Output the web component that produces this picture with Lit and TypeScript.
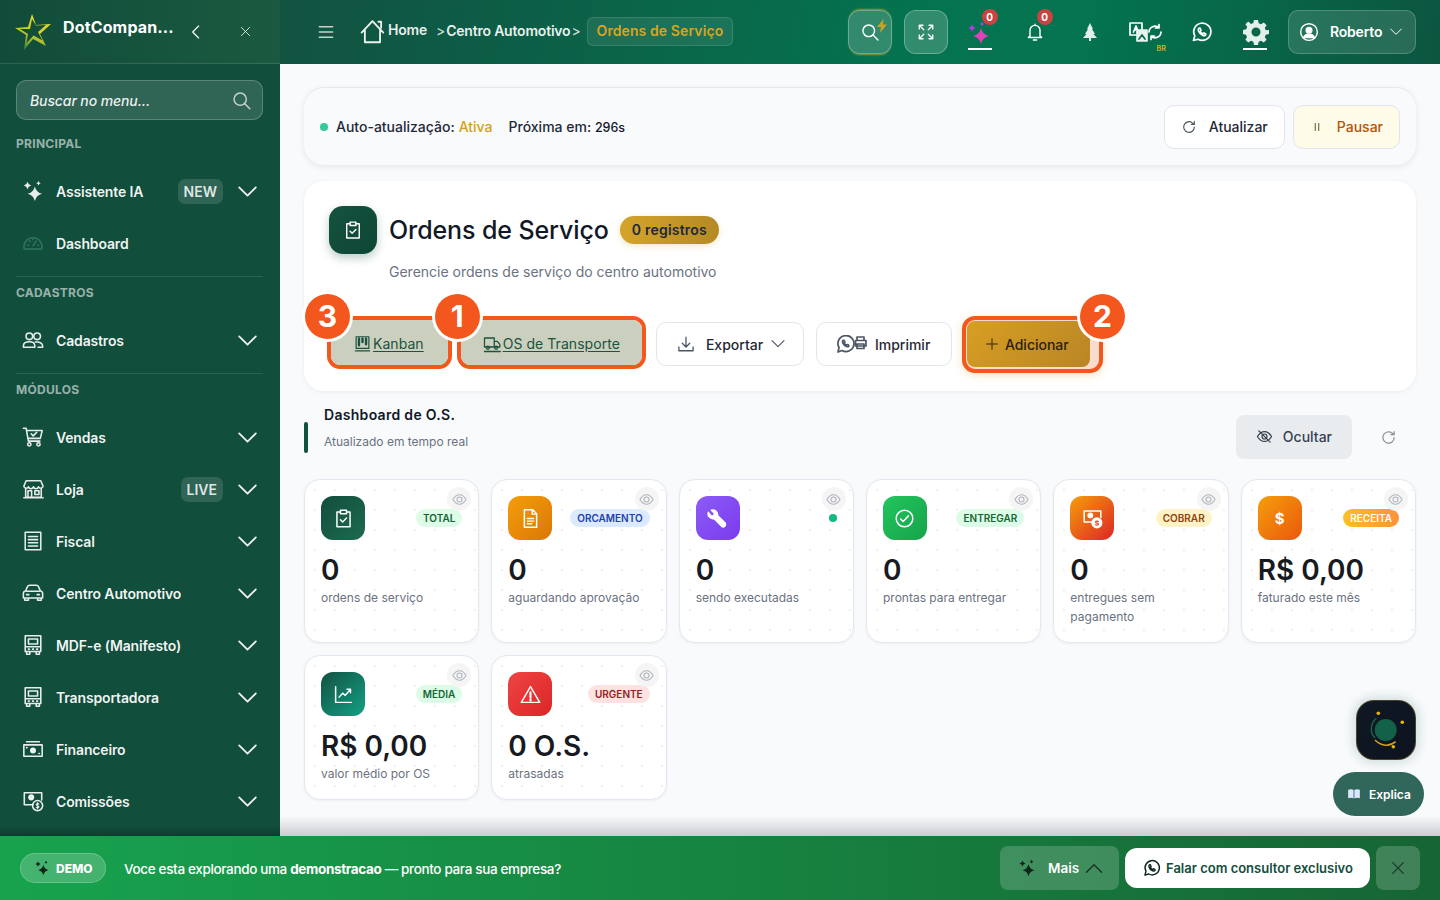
import { LitElement, css, html, svg } from 'lit'
import { customElement } from 'lit/decorators.js'

// estrela de 4 pontas, usada nos icones de IA
const star = (cx: number, cy: number, r: number) =>
  `M${cx} ${cy - r}Q${cx + r * 0.18} ${cy - r * 0.18} ${cx + r} ${cy}Q${cx + r * 0.18} ${cy + r * 0.18} ${cx} ${cy + r}Q${cx - r * 0.18} ${cy + r * 0.18} ${cx - r} ${cy}Q${cx - r * 0.18} ${cy - r * 0.18} ${cx} ${cy - r}Z`

const sparkles = `${star(13, 15, 8)}${star(5, 6, 4)}${star(17, 3.5, 2.5)}`

const whatsapp = svg`<path d="M3.5 20.5l1.3-4.6a8.6 8.6 0 1 1 3.3 3.3z" /><path d="M9 8.2c-.8.6-1 1.6-.5 2.8a7.5 7.5 0 0 0 4.4 4.4c1.2.5 2.3.2 2.8-.6.2-.4 0-.8-.3-1l-1.4-.7c-.4-.2-.7 0-.9.3l-.4.5c-1.2-.5-2.1-1.4-2.6-2.6l.5-.4c.3-.2.4-.6.3-.9l-.6-1.4c-.2-.5-.8-.7-1.3-.4z" />`

const ICONS: Record<string, unknown> = {
  chevron: svg`<path d="M4 8l8 8 8-8" />`,
  gauge: svg`<path d="M2.5 18.5a9.8 9.8 0 1 1 19 0z" /><path d="M12 15l3.5-5M6 14.5h1M17 14.5h1M8 9.5l.7.7M12 7.5v1" />`,
  team: svg`<circle cx="8" cy="8" r="3.6" /><circle cx="16.5" cy="8" r="3.6" /><path d="M1.5 20v-1.5c0-2.8 2.5-4.5 6.5-4.5s6 1.7 6 4.5V20zM14.5 14.2c4.5-.5 8 1 8 4.3V20h-5" />`,
  cart: svg`<path d="M1.5 2.5h3l2.5 14h12.5M5 5h17l-2 8.5H6.5" /><circle cx="8" cy="20" r="1.8" /><circle cx="18" cy="20" r="1.8" /><path d="M10 8.5l2.2 2.3 3.8-3.8" />`,
  store: svg`<path d="M4 11v10h17V11M2 21.5h21M4.5 3h16l2.5 6a2.6 2.6 0 0 1-5 .5 2.8 2.8 0 0 1-5.5 0 2.8 2.8 0 0 1-5.5 0 2.6 2.6 0 0 1-5-.5zM6.5 21v-7h4v7M14 14h4.5v4H14z" />`,
  receipt: svg`<path d="M3.5 2.5h17v19h-17z" stroke-dasharray="2 .5" /><path d="M7 7h10M7 10.5h10M7 14h10M7 17.5h10" />`,
  car: svg`<path d="M1.5 12c0-1 1-2 2.5-2.5L6 5c.4-1 1.3-1.5 2.5-1.5h7c1.2 0 2.1.5 2.5 1.5l2 4.5c1.5.5 2.5 1.5 2.5 2.5v5.5h-21zM3 17.5V20h4v-2.5M17 17.5V20h4v-2.5M5 10h14" /><path d="M5 13.8h2.5M16.5 13.8H19" />`,
  bus: svg`<path d="M3.5 2h17v17h-17zM3.5 14h17M7 5.5h10V11H7zM5 19v3h3.5v-3M15.5 19v3H19v-3" /><path d="M7 16.5h1M11.5 16.5h1M16 16.5h1" />`,
  cash: svg`<path d="M2 7.5h20V20H2zM5 4h14" /><circle cx="12" cy="13.7" r="2.4" fill="currentColor" /><path d="M5 10.5h.5M18.5 17h.5" />`,
  commission: svg`<path d="M12 16H2.5V3h19v8" /><circle cx="10" cy="8" r="2.5" fill="currentColor" /><circle cx="17" cy="17" r="5.5" /><path d="M18.5 15.2c-.7-.7-3-.8-3 .7s3 1 3 2.4-2.3 1.4-3 .7M17 13.7v6.6" stroke-width="1.2" />`,
  home: svg`<path d="M1.5 12.5L11.5 2l10 10.5M4.5 10v11.5h14V10M17 2.5h2.5V8" />`,
  search: svg`<circle cx="10.5" cy="10.5" r="7" /><path d="M16 16l5.5 5.5" />`,
  expand: svg`<path d="M3 8V3h5M3 3l6 6M21 8V3h-5M21 3l-6 6M3 16v5h5M3 21l6-6M21 16v5h-5M21 21l-6-6" />`,
  bell: svg`<path d="M6 17V10a6 6 0 0 1 12 0v7l2 1.5H4zM10 21.5h4M12 2.5V4" />`,
  user: svg`<circle cx="12" cy="12" r="10" /><circle cx="12" cy="9.8" r="3.4" fill="currentColor" /><path d="M5.5 18.5c1-3 3.5-4 6.5-4s5.5 1 6.5 4z" fill="currentColor" />`,
  refresh: svg`<path d="M20 12a8 8 0 1 1-3-6.2L20 8M20 3.5V8h-4.5" />`,
  pause: svg`<path d="M9 6v12M15 6v12" />`,
  clipboard: svg`<path d="M8.5 4.5h-4v17h15v-17h-4" /><path d="M8.5 2.5h7v4h-7zM8.5 13.5L11 16l4.5-4.5" />`,
  kanban: svg`<path d="M3 2.5h18V19H3z" /><path d="M7 5v9.5M12 5v5M17 5v8" stroke-width="3.4" /><path d="M2 22.5h20" />`,
  truck: svg`<path d="M2 4h13v12H2zM15 8.5h4l3.5 4V16H15z" /><circle cx="6.5" cy="17" r="2" /><circle cx="17.5" cy="17" r="2" /><path d="M2 22h21" />`,
  download: svg`<path d="M12 3v12.5M7 11l5 5 5-5M2.5 16v5h19v-5" />`,
  plus: svg`<path d="M12 3v18M3 12h18" />`,
  eyeOff: svg`<path d="M2 12c3-5 6-7 10-7s7 2 10 7c-3 5-6 7-10 7s-7-2-10-7z" /><circle cx="12" cy="12" r="3.5" /><path d="M4 4l16 16" />`,
  eye: svg`<path d="M1.5 12c3-5 6.5-7.5 10.5-7.5s7.5 2.5 10.5 7.5c-3 5-6.5 7.5-10.5 7.5S4.5 17 1.5 12z" /><circle cx="12" cy="12" r="4" />`,
  file: svg`<path d="M5 2h9.5L19 6.5V22H5zM14 2v5h5M8.5 12h7M8.5 15h7M8.5 18h5" />`,
  wrench: svg`<path d="M21 17.5l-9-9a5.5 5.5 0 0 0-7-6l3.5 3.5-.8 2.7-2.7.8L1.5 5a5.5 5.5 0 0 0 6.5 7l9 9a2.5 2.5 0 0 0 3.5-3.5z" fill="currentColor" />`,
  check: svg`<circle cx="12" cy="12" r="9.5" /><path d="M7.5 12.5l3 3 6-6.5" />`,
  money: svg`<path d="M12 16H2.5V3.5h19V11" /><circle cx="9.5" cy="8.5" r="2.5" fill="currentColor" /><circle cx="17" cy="17" r="5.5" fill="currentColor" /><path d="M18.8 15.5c-.8-.8-3.4-.8-3.4.6s3.4 1 3.4 2.4-2.6 1.3-3.4.5" stroke="#dc4a1f" stroke-width="1.3" />`,
  chart: svg`<path d="M3 3v18h18" /><path d="M7 15l4-4.5 3 2.5 6-7M16 6h4v4" />`,
  warning: svg`<path d="M12 3L1.5 21h21z" /><path d="M12 9.5v6M12 17.5V19" stroke-width="2.4" />`,
  close: svg`<path d="M4 4l16 16M20 4L4 20" />`,
  whatsapp,
}

const icon = (name: string, size: number, cls = '') =>
  html`<svg class="ico ${cls}" width=${size} height=${size} viewBox="0 0 24 24">${ICONS[name]}</svg>`

const sparkleIcon = (size: number, cls = '') =>
  html`<svg class="spark ${cls}" width=${size} height=${size} viewBox="0 0 22 24"><path d=${sparkles} /></svg>`

interface MenuItem {
  label: string
  icon: string
  tag?: string
  noArrow?: boolean
}

const MODULES: MenuItem[] = [
  { label: 'Vendas', icon: 'cart' },
  { label: 'Loja', icon: 'store', tag: 'LIVE' },
  { label: 'Fiscal', icon: 'receipt' },
  { label: 'Centro Automotivo', icon: 'car' },
  { label: 'MDF-e (Manifesto)', icon: 'bus' },
  { label: 'Transportadora', icon: 'bus' },
  { label: 'Financeiro', icon: 'cash' },
  { label: 'Comissões', icon: 'commission' },
]

interface Stat {
  icon: string
  tone: string
  tag?: string
  tagTone?: string
  value: string
  label: string
}

const STATS: Stat[] = [
  { icon: 'clipboard', tone: 'tone-forest', tag: 'TOTAL', tagTone: 'tag-green', value: '0', label: 'ordens de serviço' },
  { icon: 'file', tone: 'tone-amber', tag: 'ORCAMENTO', tagTone: 'tag-blue', value: '0', label: 'aguardando aprovação' },
  { icon: 'wrench', tone: 'tone-violet', value: '0', label: 'sendo executadas' },
  { icon: 'check', tone: 'tone-green', tag: 'ENTREGAR', tagTone: 'tag-green', value: '0', label: 'prontas para entregar' },
  { icon: 'money', tone: 'tone-red-orange', tag: 'COBRAR', tagTone: 'tag-yellow', value: '0', label: 'entregues sem pagamento' },
  { icon: 'dollar', tone: 'tone-orange', tag: 'RECEITA', tagTone: 'tag-orange', value: 'R$ 0,00', label: 'faturado este mês' },
  { icon: 'chart', tone: 'tone-teal', tag: 'MÉDIA', tagTone: 'tag-green', value: 'R$ 0,00', label: 'valor médio por OS' },
  { icon: 'warning', tone: 'tone-red', tag: 'URGENTE', tagTone: 'tag-red', value: '0 O.S.', label: 'atrasadas' },
]

@customElement('app-root')
export class AppRoot extends LitElement {
  static styles = css`
    :host {
      display: block;
      width: 1440px;
      height: 900px;
      overflow: hidden;
      font-family: Inter, 'Liberation Sans', sans-serif;
      color: #111827;
      background: #f8fafc;
    }
    * {
      box-sizing: border-box;
    }
    .ico {
      display: block;
      flex: none;
      fill: none;
      stroke: currentColor;
      stroke-width: 1.7;
      stroke-linecap: round;
      stroke-linejoin: round;
    }
    .spark {
      display: block;
      flex: none;
      fill: currentColor;
    }
    .shell {
      display: grid;
      grid-template-columns: 280px 1fr;
      height: 836px;
    }

    /* menu lateral */
    .side {
      height: 836px;
      overflow: hidden;
      color: #fff;
      background: linear-gradient(#124e3c calc(100% - 10px), #0b3d31);
    }
    .brand {
      display: flex;
      align-items: center;
      height: 64px;
      padding-left: 15px;
      border-bottom: 1px solid rgba(255, 255, 255, 0.12);
      background: linear-gradient(90deg, #114c3a, #1b5a40);
    }
    .brand-name {
      width: 125px;
      margin: -10px 0 0 12px;
      font-size: 16px;
      font-weight: 700;
      letter-spacing: 0.15px;
      white-space: nowrap;
    }
    .brand-back {
      margin-right: 36px;
    }
    .search {
      display: flex;
      align-items: center;
      justify-content: space-between;
      height: 40px;
      margin: 16px 17px 0 16px;
      padding: 0 10px 0 13px;
      border: 1px solid rgba(255, 255, 255, 0.22);
      border-radius: 10px;
      background: rgba(255, 255, 255, 0.13);
      font-size: 14px;
      font-style: italic;
      font-weight: 500;
      letter-spacing: -0.1px;
      color: rgba(255, 255, 255, 0.92);
    }
    .search .ico {
      color: rgba(255, 255, 255, 0.7);
    }
    .group {
      height: 16px;
      margin: 16px 16px 13px;
      font-size: 12px;
      line-height: 16px;
      font-weight: 700;
      letter-spacing: 0.3px;
      color: rgba(255, 255, 255, 0.58);
    }
    .rule {
      height: 1px;
      margin: 7px 17px -8px 16px;
      background: rgba(255, 255, 255, 0.12);
    }
    .item {
      display: flex;
      align-items: center;
      height: 52px;
      padding: 0 20px 0 22px;
      font-size: 14px;
      font-weight: 600;
      letter-spacing: -0.15px;
      color: rgba(255, 255, 255, 0.94);
    }
    .item-icon {
      width: 22px;
      margin-right: 12px;
      color: rgba(255, 255, 255, 0.9);
    }
    .item-icon.dim {
      color: #2d7560;
    }
    .item-label {
      flex: 1;
    }
    .item-tag {
      margin-right: 12px;
      padding: 4px 6px;
      border-radius: 7px;
      background: rgba(255, 255, 255, 0.13);
      font-size: 14px;
      line-height: 17px;
      font-weight: 600;
      letter-spacing: 0;
      color: rgba(255, 255, 255, 0.85);
    }

    /* coluna principal */
    .column {
      position: relative;
      height: 836px;
      overflow: hidden;
    }
    .top {
      display: flex;
      align-items: center;
      height: 64px;
      padding: 0 24px 0 37px;
      color: #fff;
      background: linear-gradient(100deg, #125241 0%, #04734f 55%, #04734f 70%, #0c5540 100%);
    }
    .top-menu {
      color: rgba(255, 255, 255, 0.75);
    }
    .crumbs {
      display: flex;
      align-items: center;
      margin: -1px 0 0 25px;
      font-size: 14px;
      font-weight: 600;
      letter-spacing: -0.2px;
      color: rgba(255, 255, 255, 0.92);
    }
    .crumb-home {
      margin: -5px 0 0 2px;
    }
    .crumb-text {
      margin-top: -2px;
    }
    .crumb-sep {
      margin: -2px 1px 0 9px;
      font-weight: 400;
      opacity: 0.9;
    }
    .crumb-sep.tight {
      margin-left: 1px;
    }
    .crumb-now {
      margin-left: 5px;
      padding: 0 9px;
      height: 29px;
      line-height: 25px;
      border: 1px solid rgba(255, 255, 255, 0.12);
      border-radius: 6px;
      background: rgba(255, 255, 255, 0.08);
      letter-spacing: 0.1px;
      color: #d9a41e;
    }
    .tools {
      display: flex;
      align-items: center;
      margin-left: auto;
    }
    .tool-btn {
      position: relative;
      display: grid;
      place-items: center;
      width: 44px;
      height: 44px;
      margin-right: 12px;
      border: 1px solid rgba(255, 255, 255, 0.28);
      border-radius: 12px;
      background: rgba(255, 255, 255, 0.18);
    }
    .tool-btn.glow {
      box-shadow: 0 -2px 2px -1px rgba(212, 170, 40, 0.7), 0 2px 2px -1px rgba(212, 170, 40, 0.7);
    }
    .bolt {
      position: absolute;
      top: 8px;
      right: 4px;
    }
    .tool {
      position: relative;
      display: grid;
      place-items: center;
      width: 55px;
      height: 44px;
    }
    .tool.first {
      margin-left: -7.5px;
    }
    .tool.wa {
      padding-left: 4px;
    }
    .tool.gear {
      padding-left: 2px;
    }
    .tool.mark::after {
      content: '';
      position: absolute;
      left: 15px;
      bottom: 4px;
      width: 24px;
      height: 2px;
      background: #fff;
    }
    .count {
      position: absolute;
      top: -1px;
      left: 29px;
      width: 16px;
      height: 16px;
      border-radius: 50%;
      background: #c94343;
      font-size: 10px;
      line-height: 16px;
      font-weight: 700;
      text-align: center;
    }
    .country {
      position: absolute;
      left: 39px;
      bottom: 1px;
      font-size: 7px;
      font-weight: 700;
      color: #d9a41e;
    }
    .user {
      display: flex;
      align-items: center;
      width: 128px;
      height: 44px;
      margin-left: 5.5px;
      padding: 0 10px;
      border: 1px solid rgba(255, 255, 255, 0.2);
      border-radius: 10px;
      background: rgba(255, 255, 255, 0.12);
      font-size: 14px;
      font-weight: 600;
      letter-spacing: -0.2px;
    }
    .user span {
      margin: -2px 7px 0 11px;
    }

    .page {
      padding: 23px 24px 0;
    }
    .auto {
      display: flex;
      align-items: center;
      height: 78px;
      padding: 0 16px;
      border-top: 1px solid #e5e7eb;
      border-radius: 20px;
      background: #f8fafc;
      box-shadow: 0 2px 6px rgba(15, 23, 42, 0.08);
      font-size: 14px;
      font-weight: 500;
      color: #1f2937;
    }
    .auto-dot {
      width: 8px;
      height: 8px;
      margin-right: 8px;
      border-radius: 50%;
      background: #34c997;
    }
    .auto-on {
      margin: 0 16px 0 4px;
      color: #d4a017;
    }
    .auto-next b {
      font-size: 12.5px;
      font-weight: 500;
      color: #111827;
    }
    .auto-actions {
      display: flex;
      gap: 8px;
      margin-left: auto;
    }
    .btn {
      display: flex;
      align-items: center;
      height: 44px;
      padding: 0 16px;
      border: 1px solid #e2e5ec;
      border-radius: 10px;
      background: #fff;
      font-size: 14px;
      font-weight: 500;
      color: #1f2937;
    }
    .btn .ico {
      color: #4b5563;
    }
    .btn-refresh {
      gap: 12px;
    }
    .btn-pause {
      gap: 13px;
      background: #fefbe8;
      color: #b45309;
    }
    .btn-pause .ico {
      color: #4d5a1f;
    }

    .hero {
      height: 210px;
      margin-top: 16px;
      padding: 25px 24px 0;
      border-radius: 20px;
      background: #fff;
      box-shadow: 0 1px 4px rgba(15, 23, 42, 0.06);
    }
    .hero-head {
      display: flex;
      align-items: center;
    }
    .hero-icon {
      display: grid;
      place-items: center;
      width: 48px;
      height: 48px;
      margin: 0 12px 0 1px;
      border-radius: 14px;
      background: linear-gradient(135deg, #14533f, #0e4534);
      color: #fff;
      box-shadow: 0 4px 10px rgba(15, 76, 58, 0.28);
    }
    h1 {
      margin: 0;
      font-size: 25px;
      line-height: 32px;
      font-weight: 500;
      letter-spacing: -0.1px;
      color: #111827;
    }
    .hero-count {
      margin-left: 11px;
      padding: 0 12px;
      height: 28px;
      border-radius: 14px;
      background: linear-gradient(90deg, #d4a42a, #b58a25);
      box-shadow: 0 2px 6px rgba(212, 164, 42, 0.25);
      font-size: 14px;
      line-height: 28px;
      font-weight: 600;
      letter-spacing: 0.2px;
      color: #1f2937;
    }
    .hero-sub {
      margin: 8px 0 0 61px;
      font-size: 14px;
      line-height: 20px;
      color: #6b7280;
    }
    .actions {
      display: flex;
      align-items: flex-start;
      margin: 34px 0 0 -1px;
    }
    .mark-box {
      position: relative;
      flex: none;
      border: 4px solid #f4571e;
      border-radius: 13px;
    }
    .link-btn {
      display: flex;
      align-items: center;
      gap: 2px;
      height: 45px;
      padding: 2px 22px 0 22px;
      border-radius: 9px;
      background: #cbcfbd;
      font-size: 14px;
      letter-spacing: 0.05px;
      color: #1c5240;
      text-decoration: underline;
      text-underline-offset: 2px;
    }
    .kanban {
      margin-right: 5px;
    }
    .kanban .link-btn {
      padding: 2px 24px 0 23px;
    }
    .transport {
      margin-right: 10px;
    }
    .plain {
      flex: none;
      margin-top: 6px;
    }
    .btn-export {
      gap: 11px;
      width: 148px;
      padding: 0 20px;
      margin-right: 12px;
    }
    .btn-export .caret {
      margin-left: -4px;
    }
    .btn-print {
      width: 136px;
      padding: 0 20px;
      gap: 8px;
      margin-right: 10px;
    }
    .add-box {
      width: 141px;
      height: 57px;
      padding: 1px 9px 2px 1px;
      background: #f9dccb;
      box-shadow: 0 2px 10px rgba(212, 164, 42, 0.3);
    }
    .add-btn {
      display: flex;
      align-items: center;
      gap: 6px;
      height: 100%;
      padding-left: 18px;
      border-radius: 8px;
      background: linear-gradient(135deg, #d79f22, #b98526);
      font-size: 14px;
      font-weight: 500;
      color: #2b2113;
    }
    .step {
      position: absolute;
      z-index: 2;
      top: -26px;
      left: -26px;
      width: 45px;
      height: 45px;
      border-radius: 50%;
      background: #f4571e;
      box-shadow: 0 0 0 3px #fff;
      font-size: 30px;
      line-height: 45px;
      font-weight: 700;
      text-align: center;
      color: #fff;
    }
    .step.right {
      left: auto;
      right: -26px;
    }

    .dash-head {
      display: flex;
      height: 54px;
      margin-top: 14px;
    }
    .dash-bar {
      width: 4px;
      height: 31px;
      margin-top: 17px;
      border-radius: 2px;
      background: #125241;
    }
    .dash-text {
      margin-left: 16px;
    }
    .dash-title {
      font-size: 14px;
      line-height: 20px;
      font-weight: 600;
      letter-spacing: 0.3px;
      color: #111827;
    }
    .dash-sub {
      margin-top: 7px;
      font-size: 12px;
      line-height: 20px;
      color: #6b7280;
    }
    .dash-hide {
      display: flex;
      align-items: center;
      gap: 10px;
      align-self: flex-end;
      height: 44px;
      margin-left: auto;
      padding: 0 20px 1px;
      border-radius: 8px;
      background: #e9ecef;
      font-size: 14px;
      font-weight: 500;
      color: #374151;
    }
    .dash-refresh {
      display: grid;
      place-items: center;
      align-self: flex-end;
      width: 40px;
      height: 44px;
      margin: 0 8px 0 16px;
      color: #8b9098;
    }
    .stats {
      display: grid;
      grid-template-columns: repeat(6, 1fr);
      gap: 12px;
      margin-top: 20px;
    }
    .stat {
      position: relative;
      min-width: 0;
      padding: 16px;
      border: 1px solid #e3e8f0;
      border-radius: 16px;
      background-color: #fff;
      background-image: radial-gradient(circle, #eef0f3 1px, transparent 1.2px);
      background-size: 20px 20px;
      box-shadow: 0 1px 3px rgba(15, 23, 42, 0.05);
    }
    .stat-head {
      display: flex;
      align-items: center;
      justify-content: space-between;
      height: 44px;
    }
    .stat-icon {
      display: grid;
      place-items: center;
      width: 44px;
      height: 44px;
      border-radius: 12px;
      font-size: 15px;
      font-weight: 700;
      color: #fff;
    }
    .tone-forest {
      background: linear-gradient(135deg, #124e3c, #1d6a50);
    }
    .tone-amber {
      background: linear-gradient(135deg, #f59e0b, #d97706);
    }
    .tone-violet {
      background: linear-gradient(135deg, #8b5cf6, #7c3aed);
    }
    .tone-green {
      background: linear-gradient(135deg, #22c55e, #16a34a);
    }
    .tone-red-orange {
      background: linear-gradient(135deg, #f59e0b, #dc2626);
    }
    .tone-orange {
      background: linear-gradient(135deg, #f59e0b, #ea580c);
    }
    .tone-teal {
      background: linear-gradient(135deg, #125241, #14a085);
    }
    .tone-red {
      background: linear-gradient(135deg, #ef4444, #dc2626);
    }
    .stat-tag {
      height: 18px;
      padding: 0 7px;
      border-radius: 9px;
      font-size: 10px;
      line-height: 18px;
      font-weight: 600;
    }
    .tag-green {
      background: #dcfce7;
      color: #166534;
    }
    .tag-blue {
      background: #dbeafe;
      color: #1e40af;
    }
    .tag-yellow {
      background: #fef3c7;
      color: #92400e;
    }
    .tag-orange {
      background: linear-gradient(90deg, #fbbf24, #fb923c);
      color: #fff;
    }
    .tag-red {
      background: #fee2e2;
      color: #991b1b;
    }
    .stat-dot {
      width: 8px;
      height: 8px;
      border-radius: 50%;
      background: #10b981;
    }
    .stat-value {
      margin-top: 12px;
      font-size: 28px;
      line-height: 36px;
      font-weight: 600;
      color: #171a1f;
    }
    .stat-label {
      font-size: 12px;
      line-height: 19px;
      color: #6b7280;
    }
    .stat-eye {
      position: absolute;
      top: 7px;
      right: 7px;
      display: grid;
      place-items: center;
      width: 24px;
      height: 24px;
      border-radius: 50%;
      background: #f5f5f6;
      color: #b0b4bb;
    }

    /* flutuantes */
    .fade {
      position: absolute;
      left: 0;
      right: 0;
      bottom: 0;
      height: 20px;
      background: linear-gradient(rgba(60, 60, 70, 0), rgba(60, 60, 70, 0.24));
    }
    .orb {
      position: absolute;
      top: 700px;
      right: 24px;
      width: 60px;
      height: 60px;
      border: 1px solid rgba(180, 150, 70, 0.35);
      border-radius: 18px;
      background: linear-gradient(135deg, #101824, #0d1420);
      box-shadow: 0 0 8px 4px rgba(18, 82, 65, 0.14);
    }
    .explain {
      position: absolute;
      top: 772px;
      right: 16px;
      display: flex;
      align-items: center;
      gap: 9px;
      width: 91px;
      height: 44px;
      padding-left: 15px;
      border-radius: 22px;
      background: #31675a;
      font-size: 12px;
      font-weight: 600;
      color: #fff;
    }

    /* faixa de demonstracao */
    .demo {
      display: flex;
      align-items: center;
      height: 64px;
      padding: 0 20px;
      background: linear-gradient(90deg, #17a34e, #166534);
      color: #fff;
    }
    .demo-tag {
      display: flex;
      align-items: center;
      gap: 6px;
      width: 86px;
      height: 30px;
      padding-left: 13px;
      border: 1px solid rgba(255, 255, 255, 0.2);
      border-radius: 15px;
      background: rgba(255, 255, 255, 0.2);
      font-size: 12px;
      font-weight: 800;
    }
    .demo-tag .spark,
    .demo-more .spark {
      color: #10231a;
    }
    .demo-text {
      margin: 1px 0 0 18px;
      font-size: 13.5px;
      font-weight: 500;
      letter-spacing: -0.35px;
    }
    .demo-text b {
      font-weight: 700;
    }
    .demo-more {
      display: flex;
      align-items: center;
      gap: 12px;
      width: 119px;
      height: 44px;
      margin-left: auto;
      padding-left: 18px;
      border-radius: 8px;
      background: rgba(255, 255, 255, 0.18);
      font-size: 13.5px;
      font-weight: 600;
    }
    .demo-more .ico {
      margin-left: -7px;
      color: #1c3328;
    }
    .demo-call {
      display: flex;
      align-items: center;
      gap: 4px;
      width: 245px;
      height: 40px;
      margin-left: 6px;
      padding-left: 17px;
      border-radius: 12px;
      background: #fff;
      font-size: 13px;
      font-weight: 600;
      white-space: nowrap;
      color: #124e3c;
    }
    .demo-call .ico {
      color: #10231a;
    }
    .demo-close {
      display: grid;
      place-items: center;
      width: 44px;
      height: 44px;
      margin-left: 6px;
      border-radius: 8px;
      background: rgba(255, 255, 255, 0.18);
      color: #1c3328;
    }
  `

  private renderItem(item: MenuItem, dim = false) {
    return html`
      <div class="item">
        <span class="item-icon ${dim ? 'dim' : ''}">${icon(item.icon, 22)}</span>
        <span class="item-label">${item.label}</span>
        ${item.tag ? html`<span class="item-tag">${item.tag}</span>` : null}
        ${item.noArrow ? null : icon('chevron', 25)}
      </div>
    `
  }

  private renderSide() {
    return html`
      <aside class="side">
        <div class="brand">
          <svg width="36" height="38" viewBox="0 0 36 38">
            <defs>
              <linearGradient id="logo" x1="0.7" y1="0" x2="0.2" y2="1">
                <stop offset="0" stop-color="#f0e02c" />
                <stop offset="0.55" stop-color="#c2c92e" />
                <stop offset="1" stop-color="#2d7a3d" />
              </linearGradient>
            </defs>
            <path
              fill="url(#logo)"
              fill-rule="evenodd"
              d="M17 1l4 11 15-1-11 10 6 12-13-7-9 11 2-15L0 15l13-1zM17 6l-2 10-10 0 8 5-1.5 9 7-7.5 9 5-4.5-8.5 8-7-10 .5z"
            />
          </svg>
          <span class="brand-name">DotCompan...</span>
          <svg class="ico brand-back" width="16" height="16" viewBox="0 0 24 24"><path d="M16 3l-9 9 9 9" /></svg>
          <svg class="ico" width="11" height="11" viewBox="0 0 24 24" stroke-width="3"><path d="M3 3l18 18M21 3L3 21" /></svg>
        </div>
        <div class="search">Buscar no menu... ${icon('search', 21)}</div>
        <div class="group">PRINCIPAL</div>
        <div class="item">
          <span class="item-icon">${sparkleIcon(22)}</span>
          <span class="item-label">Assistente IA</span>
          <span class="item-tag">NEW</span>
          ${icon('chevron', 25)}
        </div>
        ${this.renderItem({ label: 'Dashboard', icon: 'gauge', noArrow: true }, true)}
        <div class="rule"></div>
        <div class="group">CADASTROS</div>
        ${this.renderItem({ label: 'Cadastros', icon: 'team' })}
        <div class="rule"></div>
        <div class="group">MÓDULOS</div>
        ${MODULES.map((m) => this.renderItem(m))}
      </aside>
    `
  }

  private renderTop() {
    return html`
      <header class="top">
        <svg class="ico top-menu" width="18" height="18" viewBox="0 0 24 24" stroke-width="1.5"><path d="M3 5h18M3 12h18M3 19h18" /></svg>
        <nav class="crumbs">
          ${icon('home', 26)}
          <span class="crumb-home">Home</span>
          <span class="crumb-sep">&gt;</span>
          <span class="crumb-text">Centro Automotivo</span>
          <span class="crumb-sep tight">&gt;</span>
          <span class="crumb-now">Ordens de Serviço</span>
        </nav>
        <div class="tools">
          <div class="tool-btn glow">
            ${icon('search', 20)}
            <svg class="bolt" width="10" height="14" viewBox="0 0 10 14"><path fill="#c9a227" d="M6.5 0L0 8h4l-1 6 7-8.5H6z" /></svg>
          </div>
          <div class="tool-btn">${icon('expand', 18)}</div>
          <div class="tool first mark">
            <svg class="spark" width="26" height="26" viewBox="0 0 26 26">
              <path fill="#e040b8" d=${star(14, 17, 8)} />
              <path fill="#b23ee0" d=${star(5, 9, 4)} />
              <path fill="#b23ee0" d=${star(15, 5, 2.5)} />
            </svg>
            <span class="count">0</span>
          </div>
          <div class="tool">${icon('bell', 20)}<span class="count">0</span></div>
          <div class="tool">
            <svg width="16" height="20" viewBox="0 0 16 20"><path fill="#e2efea" d="M8 1l3 6h-1l3 5h-1.5L15 16H9v3H7v-3H1l3.5-4H3l3-5H5z" /></svg>
          </div>
          <div class="tool">
            <svg class="ico" width="33" height="20" viewBox="0 0 33 20" stroke-width="1.3">
              <path d="M1 1h12v12H1z" />
              <path d="M4.5 10L7 4l2.5 6M5.5 8h3" />
              <path d="M8 8h10v11H8z" fill="#e8f2ee" stroke="#e8f2ee" />
              <path d="M10 17l3-4 3 4" stroke="#0a6a4d" />
              <path d="M20 10a6 6 0 0 1 10-4.3M32 10a6 6 0 0 1-10 4.3M30 2.5V6h-3.5M22 17.5V14h3.5" />
            </svg>
            <span class="country">BR</span>
          </div>
          <div class="tool wa">${icon('whatsapp', 24)}</div>
          <div class="tool mark gear">
            <svg width="26" height="26" viewBox="0 0 26 26">
              <path
                fill="#e2efea"
                fill-rule="evenodd"
                d="M11 1h4l.7 3.2 2.3 1 2.8-1.8 2.8 2.8-1.8 2.8 1 2.3L26 11v4l-3.2.7-1 2.3 1.8 2.8-2.8 2.8-2.8-1.8-2.3 1L15 26h-4l-.7-3.2-2.3-1-2.8 1.8-2.8-2.8L4 18l-1-2.3L0 15v-4l3.2-.7 1-2.3-1.8-2.8 2.8-2.8L8 5l2.3-1zM13 8.5a4.5 4.5 0 1 0 0 9 4.5 4.5 0 0 0 0-9z"
              />
            </svg>
          </div>
          <div class="user">
            ${icon('user', 20)}
            <span>Roberto</span>
            <svg class="ico" width="14" height="14" viewBox="0 0 24 24" stroke-width="1.7"><path d="M3 7l9 9 9-9" /></svg>
          </div>
        </div>
      </header>
    `
  }

  private renderStat(s: Stat) {
    return html`
      <article class="stat">
        <div class="stat-head">
          <div class="stat-icon ${s.tone}">${s.icon === 'dollar' ? '$' : icon(s.icon, 21)}</div>
          ${s.tag ? html`<span class="stat-tag ${s.tagTone}">${s.tag}</span>` : html`<span class="stat-dot"></span>`}
        </div>
        <div class="stat-value">${s.value}</div>
        <div class="stat-label">${s.label}</div>
        <div class="stat-eye">${icon('eye', 15)}</div>
      </article>
    `
  }

  private renderPage() {
    return html`
      <main class="page">
        <section class="auto">
          <span class="auto-dot"></span>
          <span>Auto-atualização:</span>
          <span class="auto-on">Ativa</span>
          <span class="auto-next">Próxima em: <b>296s</b></span>
          <div class="auto-actions">
            <div class="btn btn-refresh">${icon('refresh', 16)} Atualizar</div>
            <div class="btn btn-pause">${icon('pause', 14)} Pausar</div>
          </div>
        </section>

        <section class="hero">
          <div class="hero-head">
            <div class="hero-icon">${icon('clipboard', 20)}</div>
            <h1>Ordens de Serviço</h1>
            <span class="hero-count">0 registros</span>
          </div>
          <p class="hero-sub">Gerencie ordens de serviço do centro automotivo</p>
          <div class="actions">
            <div class="mark-box kanban">
              <div class="link-btn">${icon('kanban', 17)} Kanban</div>
              <span class="step">3</span>
            </div>
            <div class="mark-box transport">
              <div class="link-btn">${icon('truck', 18)} OS de Transporte</div>
              <span class="step">1</span>
            </div>
            <div class="btn plain btn-export">
              ${icon('download', 18)} Exportar
              <svg class="ico caret" width="16" height="16" viewBox="0 0 24 24"><path d="M3 7l9 9 9-9" /></svg>
            </div>
            <div class="btn plain btn-print">
              <svg class="ico" width="30" height="18" viewBox="0 0 30 18" stroke-width="1.3">
                <path d="M1 17l1-4.5a8 8 0 1 1 3 3z" />
                <path d="M6 5.5c-.6.5-.7 1.5-.2 2.5a6.5 6.5 0 0 0 3.7 3.5c1 .4 2 .1 2.3-.5.2-.4 0-.7-.3-.9l-1-.5c-.3-.2-.6-.1-.8.2l-.3.4c-1-.4-1.8-1.2-2.2-2.2l.4-.4c.2-.2.3-.5.2-.8l-.5-1c-.2-.4-.7-.6-1.3-.3z" />
                <path d="M20 5.5V2h7v3.5M18.5 5.5H29V11H18.5zM20 9h7v4.5h-7z" />
              </svg>
              Imprimir
            </div>
            <div class="mark-box add-box">
              <div class="add-btn">${icon('plus', 14)} Adicionar</div>
              <span class="step right">2</span>
            </div>
          </div>
        </section>

        <div class="dash-head">
          <div class="dash-bar"></div>
          <div class="dash-text">
            <div class="dash-title">Dashboard de O.S.</div>
            <div class="dash-sub">Atualizado em tempo real</div>
          </div>
          <div class="dash-hide">${icon('eyeOff', 17)} Ocultar</div>
          <div class="dash-refresh">${icon('refresh', 17)}</div>
        </div>

        <section class="stats">${STATS.map((s) => this.renderStat(s))}</section>
      </main>
    `
  }

  render() {
    return html`
      <div class="shell">
        ${this.renderSide()}
        <div class="column">
          ${this.renderTop()} ${this.renderPage()}
          <div class="fade"></div>
          <div class="orb">
            <svg width="58" height="58" viewBox="1 1 58 58" fill="none">
              <circle cx="29.7" cy="30" r="11" fill="#14614a" />
              <path d="M20.3 18.3C15 22.5 13 32 19 38" stroke="#14614a" stroke-width="1.5" />
              <path d="M19 40c4 4.5 13 8 20.7 1.7" stroke="#d4a017" stroke-width="1.5" />
              <circle cx="22.3" cy="13.3" r="1.8" fill="#eab308" />
              <circle cx="46.3" cy="22.3" r="1.8" fill="#eab308" />
              <circle cx="37.3" cy="46.7" r="1.8" fill="#eab308" />
            </svg>
          </div>
          <div class="explain">
            <svg width="12" height="10" viewBox="0 0 14 12"><path fill="#dbe7fb" d="M0 1c2.5-1 5-1 6.5.3v10C5 10.2 2.5 10 0 11zM14 1c-2.5-1-5-1-6.5.3v10C9 10.2 11.5 10 14 11z" /></svg>
            Explica
          </div>
        </div>
      </div>
      <footer class="demo">
        <div class="demo-tag">${sparkleIcon(16)} DEMO</div>
        <div class="demo-text">Voce esta explorando uma <b>demonstracao</b> — pronto para sua empresa?</div>
        <div class="demo-more">
          ${sparkleIcon(18)} Mais
          <svg class="ico" width="20" height="20" viewBox="0 0 24 24" stroke-width="1.3"><path d="M3 17l9-9 9 9" /></svg>
        </div>
        <div class="demo-call">${icon('whatsapp', 20)} Falar com consultor exclusivo</div>
        <div class="demo-close">${icon('close', 16)}</div>
      </footer>
    `
  }
}
